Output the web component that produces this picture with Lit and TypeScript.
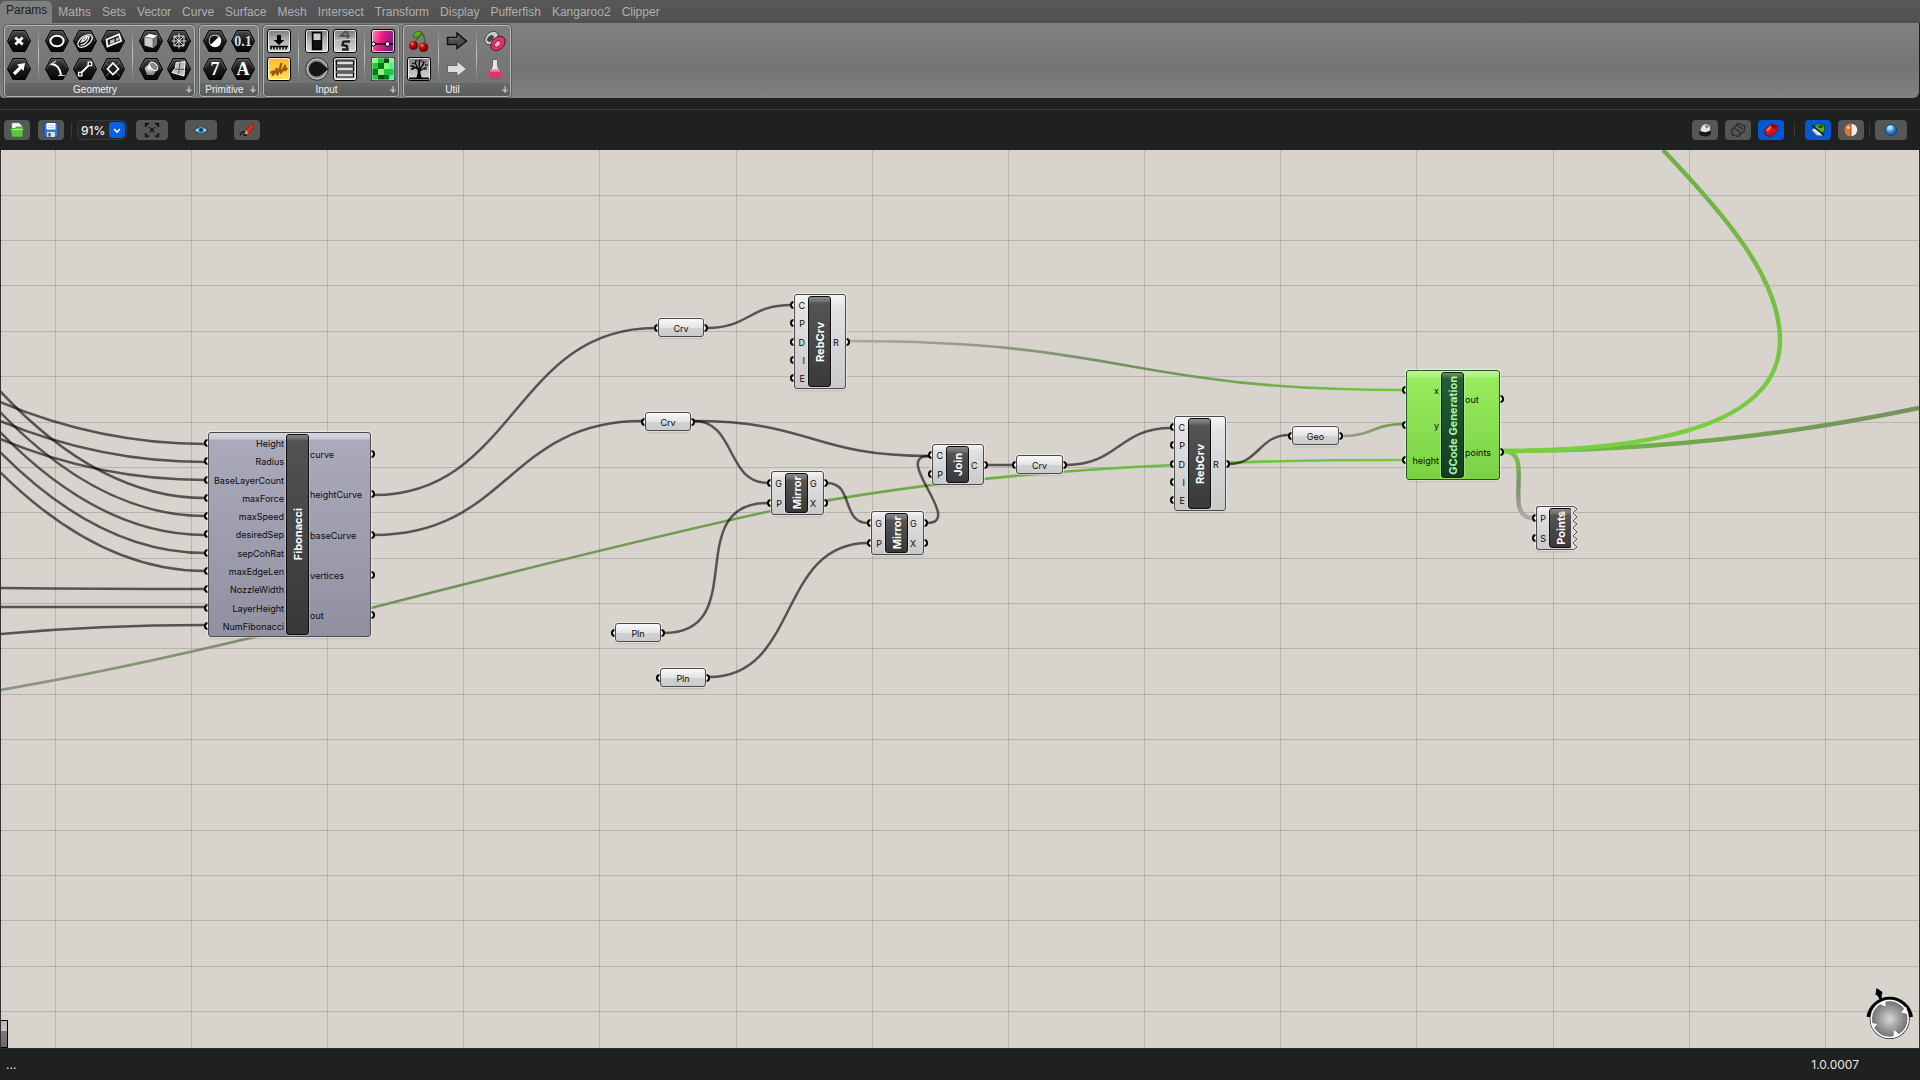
import { LitElement, html, svg, css, nothing } from "lit";
import { customElement, property } from "lit/decorators.js";
import { classMap } from "lit/directives/class-map.js";
import { styleMap } from "lit/directives/style-map.js";

interface NodeData {
  kind: "component" | "param" | "cluster" | "selected" | "torn";
  title: string;
  x: number;
  y: number;
  w: number;
  h: number;
  inputs: string[];
  outputs: string[];
}

const NODES: NodeData[] = [
  {
    kind: "cluster", title: "Fibonacci", x: 208, y: 282, w: 163, h: 205,
    inputs: ["Height", "Radius", "BaseLayerCount", "maxForce", "maxSpeed", "desiredSep", "sepCohRat", "maxEdgeLen", "NozzleWidth", "LayerHeight", "NumFibonacci"],
    outputs: ["curve", "heightCurve", "baseCurve", "vertices", "out"],
  },
  { kind: "component", title: "RebCrv", x: 794, y: 144, w: 52, h: 95, inputs: ["C", "P", "D", "I", "E"], outputs: ["R"] },
  { kind: "component", title: "Mirror", x: 771, y: 321, w: 53, h: 44, inputs: ["G", "P"], outputs: ["G", "X"] },
  { kind: "component", title: "Mirror", x: 871, y: 361, w: 53, h: 44, inputs: ["G", "P"], outputs: ["G", "X"] },
  { kind: "component", title: "Join", x: 932, y: 294, w: 52, h: 41, inputs: ["C", "P"], outputs: ["C"] },
  { kind: "component", title: "RebCrv", x: 1174, y: 266, w: 52, h: 95, inputs: ["C", "P", "D", "I", "E"], outputs: ["R"] },
  { kind: "selected", title: "GCode Generation", x: 1406, y: 220, w: 94, h: 110, inputs: ["x", "y", "height"], outputs: ["out", "points"] },
  { kind: "torn", title: "Points", x: 1536, y: 356, w: 38, h: 44, inputs: ["P", "S"], outputs: [] },
  { kind: "param", title: "Crv", x: 658, y: 168, w: 46, h: 19, inputs: [""], outputs: [""] },
  { kind: "param", title: "Crv", x: 645, y: 262, w: 46, h: 19, inputs: [""], outputs: [""] },
  { kind: "param", title: "Crv", x: 1016, y: 305, w: 47, h: 19, inputs: [""], outputs: [""] },
  { kind: "param", title: "Geo", x: 1292, y: 276, w: 47, h: 19, inputs: [""], outputs: [""] },
  { kind: "param", title: "Pln", x: 615, y: 473, w: 46, h: 19, inputs: [""], outputs: [""] },
  { kind: "param", title: "Pln", x: 660, y: 518, w: 46, h: 19, inputs: [""], outputs: [""] },
];

/* Wire between two ports: leaves and arrives horizontally, bends harder when the drop is steep. */
const link = (x1: number, y1: number, x2: number, y2: number) => {
  const d = Math.max((x2 - x1) / 2, Math.abs(y2 - y1) * 0.68);
  return `M${x1} ${y1} C${x1 + d} ${y1} ${x2 - d} ${y2} ${x2} ${y2}`;
};

/* Wire coming in from beyond the left edge of the canvas. */
const incoming = (y0: number, y1: number) => `M0 ${y0} Q100 ${y1} 205 ${y1}`;

const WIRES = [
  incoming(252, 294), incoming(271, 312), incoming(289, 330), incoming(241, 348),
  incoming(262, 366), incoming(282, 385), incoming(302, 403), incoming(322, 421),
  incoming(438, 439), incoming(457, 457), incoming(484, 475),
  link(374, 345, 655, 178), link(374, 385, 642, 271),
  link(707, 178, 791, 155), link(694, 271, 929, 306), link(694, 271, 768, 333),
  link(827, 333, 868, 373), link(987, 315, 1013, 315), link(1066, 315, 1171, 278),
  link(1229, 314, 1289, 285), link(664, 483, 768, 353), link(709, 527, 868, 393),
  "M927 373 C965 373 891 306 929 306",
];

@customElement("gh-node")
class GhNode extends LitElement {
  @property({ attribute: false }) data!: NodeData;

  static styles = css`
    :host { display: block; font-family: Inter, Roboto, "Liberation Sans", sans-serif; font-size: 9px; line-height: 12px; color: #0c0c0c; }
    .node { position: relative; height: 100%; display: flex; }
    .body {
      position: relative; flex: 1; box-sizing: border-box; min-width: 0; display: flex; padding: 1px 0;
      border: 1px solid #4b4b4b; border-radius: 3px;
      background: linear-gradient(#f6f6f6, #e2e2e2 14%, #c9c9c9);
      box-shadow: 0 0 1px 1px rgba(255, 255, 255, 0.55), 0 2px 2px rgba(0, 0, 0, 0.12);
    }
    .cluster .body { background: linear-gradient(#d6d6de, #cbcbd6 6px, #abaabb 7px, #9190a1); border-color: #4a4a52; }
    .selected .body { background: linear-gradient(#bdf89a, #a9f07b 6px, #98ec5e 7px, #7ad144); border-color: #1d5a1c; }
    .param .body {
      align-items: center; justify-content: center; padding: 2px 0 0;
      background: linear-gradient(#fafafa, #e4e4e4 50%, #d2d2d2 51%, #cbcbcb);
    }
    .torn .body { border-right: 0; border-radius: 3px 0 0 3px; }
    .list { display: flex; flex-direction: column; white-space: nowrap; width: 14px; }
    .list.in { align-items: flex-end; width: 10px; }
    .list.out { flex: 1; }
    .cluster .in { width: 75px; }
    .selected .in { width: 32px; }
    .label { flex: 1; display: flex; align-items: center; padding-top: 2px; }
    .title {
      width: 21px; margin: 0 2px 0 3px; flex: none; border: 1px solid #0d0d0d; border-radius: 3px;
      background: linear-gradient(#8b8b8b, #6a6a6a 5px, #555 6px, #393939);
      box-shadow: 0 0 0 1px rgba(255, 255, 255, 0.25);
      display: flex; align-items: center; justify-content: center; overflow: hidden;
    }
    .cluster .title { margin-left: 2px; background: linear-gradient(#848484, #606060 5px, #525252 6px, #383838); }
    .selected .title { margin: 0 1px 0 2px; background: linear-gradient(#6a8f70, #37663f 5px, #265c37 6px, #123d20); border-color: #0c2a12; }
    .cluster .title { margin-right: 1px; }
    .name { writing-mode: vertical-rl; transform: rotate(180deg); font-weight: 700; font-size: 11px; line-height: 20px; color: #fff; white-space: nowrap; }
    .selected .name { color: #a6f5a6; }
    .ports { position: absolute; top: 2px; bottom: 2px; width: 4px; display: flex; flex-direction: column; }
    .ports.left { left: -4px; }
    .ports.right { right: -4px; }
    .port { flex: 1; display: flex; align-items: center; }
    .dot { box-sizing: border-box; width: 4px; height: 8px; border: 2px solid #000; background: #fff; }
    .left .dot { border-right: 0; border-radius: 4px 0 0 4px; }
    .right .dot { border-left: 0; border-radius: 0 4px 4px 0; }
    .tear { position: absolute; top: 0; right: -4px; width: 7px; height: 100%; }
  `;

  private ports(side: "left" | "right", names: string[]) {
    return html`<div class="ports ${side}">${names.map(() => html`<div class="port"><span class="dot"></span></div>`)}</div>`;
  }

  render() {
    const d = this.data;
    const param = d.kind === "param";
    const labels = (names: string[], side: string) =>
      html`<div class="list ${side}">${names.map((n) => html`<span class="label">${n}</span>`)}</div>`;
    return html`
      <div class="node ${d.kind}">
        ${this.ports("left", d.inputs)} ${this.ports("right", d.outputs)}
        <div class="body">
          ${param
            ? d.title
            : html`${labels(d.inputs, "in")}
                <div class="title"><span class="name">${d.title}</span></div>
                ${d.outputs.length ? labels(d.outputs, "out") : nothing}`}
        </div>
        ${d.kind === "torn"
          ? html`<svg class="tear" viewBox="0 0 7 44">
              <path d="M0 0H3L6 3L2 7L6 11L2 15L6 18L2 22L6 26L2 30L6 33L2 37L6 41L3 44H0Z" fill="#dcdcdc" />
              <path d="M0 .5H3L6 3L2 7L6 11L2 15L6 18L2 22L6 26L2 30L6 33L2 37L6 41L3 43.5H0" fill="none" stroke="#555" />
            </svg>`
          : nothing}
      </div>
    `;
  }
}

const hex = (inner: unknown) => svg`
  <path d="M.5 12L6 1.5H18L23.5 12L18 22.5H6Z" fill="url(#hex)" stroke="#000" stroke-linejoin="round"/>
  <path d="M1.8 12L6.6 2.7H17.4L22.2 12" fill="none" stroke="#777" stroke-opacity=".7" stroke-width=".8"/>
  ${inner}`;

const tile = (inner: unknown, fill = "url(#tile)") => svg`
  <rect x=".5" y=".5" width="23" height="23" rx="2.5" fill=${fill} stroke="#000"/>
  <rect x="1.5" y="1.5" width="21" height="21" rx="1.5" fill="none" stroke="#fff" stroke-opacity=".75"/>
  ${inner}`;

const ICONS: Record<string, unknown> = {
  Point: hex(svg`<path d="M8.3 8.5L15.7 15.5M15.7 8.5L8.3 15.5" stroke="#fff" stroke-width="2.8"/>`),
  Vector: hex(svg`<path d="M7 17L14 10" stroke="#fff" stroke-width="3.2"/><path d="M10 7.5L18 6L16.5 14Z" fill="#fff"/>`),
  Circle: hex(svg`<ellipse cx="12" cy="12" rx="6.6" ry="5.2" fill="#111" stroke="#fff" stroke-width="2"/>`),
  Arc: hex(svg`<path d="M6 7Q14 7 16 18" fill="none" stroke="#fff" stroke-width="2"/><path d="M11 4L5 8M13 18.5H20" stroke="#ccc" stroke-width="1.2"/>`),
  Curve: hex(svg`<g fill="none" stroke="#eee" stroke-width="1.3" transform="rotate(-38 12 12)"><ellipse cx="12" cy="12" rx="8.4" ry="4.6"/><path d="M6 12.5Q12 16 18 11Q14 7.5 8.5 10.5Q13 12.5 16 10"/></g>`),
  Line: hex(svg`<path d="M7.5 16.5L16.5 7.5" stroke="#fff" stroke-width="1.8"/><path d="M5.5 15.5h3.4v3.4h-3.4zM15.2 5.2h3.4v3.4h-3.4z" fill="#111" stroke="#fff" stroke-width="1.3"/>`),
  Plane: hex(svg`<path d="M5.5 10.5L18 5.5L20 12L6.5 17.5Z" fill="#222" stroke="#fff" stroke-width="1.8"/><path d="M9 11.5L13.5 9.8V13.5L9 15ZM15 9.2L17.5 8.3L18 11L15 12.2Z" fill="#bbb"/>`),
  Rectangle: hex(svg`<path d="M5 6L19 19M19 5L5 19" stroke="#777" stroke-width=".9"/><path d="M12 6L17.5 12L12 17.5L6.5 12Z" fill="#222" stroke="#fff" stroke-width="1.7"/>`),
  Box: hex(svg`<path d="M5.5 8L10 5L18 6.5V15L14 19L5.5 16.5Z" fill="#ccc"/><path d="M5.5 8L10 5L18 6.5L14 9.5Z" fill="#fff"/><path d="M14 9.5L18 6.5V15L14 19Z" fill="#777"/><path d="M5.5 8L14 9.5V19" fill="none" stroke="#444" stroke-width=".6"/>`),
  Brep: hex(svg`<path d="M5.5 11L11.5 5.5L18.5 12L14.5 18L8 18Z" fill="url(#ball)"/><ellipse cx="14.8" cy="9.3" rx="5" ry="3.2" fill="#888" stroke="#fff" transform="rotate(45 14.8 9.3)"/>`),
  Mesh: hex(svg`<path d="M7 7H17V17H7ZM12 4.5V19.5M4.5 12H19.5M7 7L17 17M17 7L7 17M7 9.5L9.5 7M14.5 17L17 14.5" fill="none" stroke="#ddd" stroke-width="1"/>`),
  Surface: hex(svg`<path d="M9 6L18 4.5L17 19L5 15.5Q10 11 9 6Z" fill="#bbb" stroke="#fff"/><path d="M13 5.5L11.5 17M8 12L17.5 12.5" stroke="#444" stroke-width=".9"/>`),
  Boolean: hex(svg`<circle cx="12" cy="12" r="6.2" fill="#fff"/><path d="M15.6 8A4.8 4.8 0 0 0 8 15.6Z" fill="#111"/>`),
  Number: hex(svg`<text x="12" y="17" class="serif">0.1</text>`),
  Integer: hex(svg`<text x="12" y="18" class="big">7</text>`),
  Text: hex(svg`<text x="12" y="18" class="big">A</text>`),
  "Import Data": tile(svg`<path d="M10 6h4v5h3.4L12 16L6.6 11H10Z" fill="#000"/><path d="M3 17.5H21M4 20.5v-3M7 20.5v-3M10 20.5v-3M13 20.5v-3M16 20.5v-3M19 20.5v-3" stroke="#000" stroke-width="1.5"/>`),
  Graffiti: tile(svg`<path d="M3.5 16Q5 14 6 14.5Q5 18.5 6 18L10 11Q9 18 10.5 17.5L14.5 6Q12.5 15.5 14 16L18.5 8Q16.5 14 18 13.5L20.5 11" fill="none" stroke="#a35608" stroke-width="2"/>`, "url(#gold)"),
  Toggle: tile(svg`<path d="M7.5 3.5h9v17h-9z" fill="#111" stroke="#000" stroke-width="1.4"/><path d="M8.5 4.5h7V11h-7z" fill="#ccc"/>`),
  Knob: svg`<circle cx="12" cy="12" r="11.2" fill="#8d8d8d" stroke="#2c2c2c" stroke-width=".9"/><circle cx="12" cy="12" r="10" fill="none" stroke="#d0d0d0" stroke-width=".9"/><circle cx="11.5" cy="12" r="7.6" fill="#161616"/><path d="M15.5 5.5L23.5 12L15.5 18.5Z" fill="#161616"/>`,
  Digits: tile(svg`<path d="M13 2L8 7H17M14.5 2V9.5" stroke="#555" stroke-width="2.2" fill="none"/><path d="M17 12.5H10.5L9.5 16L14 17L14.5 20.5H9" stroke="#222" stroke-width="2.4" fill="none"/><path d="M2 11.5L22 10" stroke="#ddd" stroke-width=".8"/>`),
  "Value List": tile(svg`<path d="M3.5 4h17v4h-17zM3.5 10h17v4h-17zM3.5 16h17v4h-17z" fill="#ddd" stroke="#000" stroke-width="1.2"/>`),
  Gradient: tile(svg`<path d="M2 15H22" stroke="#000" stroke-width="1.3"/><circle cx="2.5" cy="15" r="2" fill="#fff" stroke="#000"/><circle cx="16.5" cy="15" r="2.3" fill="#fff" stroke="#000"/>`, "url(#pink)"),
  "Image Sampler": svg`<rect width="24" height="24" rx="2.5" fill="#000"/><path d="M1 1h22v22H1z" fill="#1ec83c"/>
    <path d="M1 1h6v5H1zM13 6h5v6h-5zM7 12h6v6H7zM18 1h5v5h-5z" fill="#8af47c"/><path d="M7 6h6v6H7zM1 12h6v6H1zM13 18h5v5h-5z" fill="#067616"/><path d="M13 1h5v5h-5zM7 18h6v5H7z" fill="#0a4f12"/><path d="M18 6h5v6h-5zM18 18h5v5h-5z" fill="#46f0a0"/><rect x="1" y="1" width="22" height="22" rx="1.5" fill="none" stroke="#e8ffe8" stroke-opacity=".7"/>`,
  "Cherry Picker": svg`<path d="M7 15Q10 9 15 4Q18 8 18 14" fill="none" stroke="#3d6b14" stroke-width="1.4"/><path d="M15 3Q8 0 6 8Q12 10 15 3Z" fill="#5fae1c" stroke="#23520a" stroke-width=".7"/><circle cx="6.5" cy="16.5" r="4.6" fill="url(#red)"/><circle cx="16.5" cy="18.3" r="4.8" fill="url(#red)"/>`,
  Tree: tile(svg`<path d="M10 21Q12 17 11.3 12L5 9M11.5 14L8 5M12 12L12.5 4M12.5 13L17 6M12.5 14L19.5 10M5 12L8.5 10.5" fill="none" stroke="#000" stroke-width="1.4"/><path d="M9.5 21.5Q11.5 18 11 12H13.3Q13 18 15 21.5Z" fill="#000"/><path d="M3.5 9h3M5 6.5h3M8 4h3M12 3.5h3M15.5 5h3M18 8h3M17 12h3M4 12h2" stroke="#000" stroke-width="1.6" stroke-dasharray="1.6 .7"/><path d="M2 21.5H22" stroke="#000" stroke-width="2"/>`),
  "Relay In": svg`<path d="M2.5 8.5H12V4L21.5 12L12 19.5V15.5H2.5Z" fill="#4c4e4d" stroke="#111" stroke-width="1.5"/><path d="M4 9.8H13V7" fill="none" stroke="#999" stroke-width=".7"/>`,
  "Relay Out": svg`<path d="M2.5 8.5H12V4L21.5 12L12 19.5V15.5H2.5Z" fill="#dcdcdc" stroke="#555" stroke-width=".8"/>`,
  "Data Dam": svg`<ellipse cx="8.5" cy="9" rx="5.6" ry="7.8" transform="rotate(45 8.5 9)" fill="#c8c8c8" stroke="#333" stroke-width=".8"/><ellipse cx="7.5" cy="9.5" rx="2.6" ry="3.8" transform="rotate(45 7.5 9.5)" fill="#444"/><ellipse cx="15" cy="14.5" rx="6" ry="8.2" transform="rotate(45 15 14.5)" fill="#e2336f" stroke="#4d0c26" stroke-width=".9"/><ellipse cx="14.5" cy="15" rx="2.6" ry="3.8" transform="rotate(45 14.5 15)" fill="#f9a5c4" stroke="#7c1239" stroke-width=".9"/>`,
  Flask: svg`<path d="M9.5 2.5H14.5V9L19.5 19Q20 21.5 17.5 21.5H6.5Q4 21.5 4.7 19L9.5 9Z" fill="#e6e6ea" stroke="#555" stroke-width=".8"/><path d="M7.7 12.6H16.3L19.3 19Q19.6 21 17.5 21H6.5Q4.5 21 5 19Z" fill="#d9386f"/><path d="M7.7 12.6H16.3L17 14.5H7Z" fill="#f58db2"/>`,
  Open: svg`<path d="M7 5h7l3 3v5H7z" fill="#f3f3f3" stroke="#aaa" stroke-width=".5"/><path d="M5.5 10.5H10L11.5 9H18.5L17.5 19H7Z" fill="#5cc63c" stroke="#2f7f1e" stroke-width=".7"/><path d="M6.5 11.5H17.5" stroke="#a7ef8a"/>`,
  Save: svg`<path d="M5 5H19V19H6.5L5 17.5Z" fill="#2d79e0" stroke="#123f8c" stroke-width=".9"/><path d="M7.5 5h9v6.5h-9z" fill="#fff"/><path d="M9 7.5h6M9 9.5h6" stroke="#bbb" stroke-width=".8"/><path d="M8 14h8v5H8z" fill="#ddd"/><path d="M9.5 15h2v3.5h-2z" fill="#123f8c"/>`,
  "Zoom Extents": svg`<path d="M5.8 9V5.8H9M15 5.8H18.2V9M18.2 15V18.2H15M9 18.2H5.8V15" fill="none" stroke="#161717" stroke-width="2"/><path d="M9 9L15 15M15 9L9 15" stroke="#161717"/><circle cx="12" cy="12" r="1.8" fill="#161717"/>`,
  Views: svg`<path d="M5.5 12.5Q12 5 18.5 12.5Q12 18 5.5 12.5Z" fill="#e9f8ff" stroke="#111" stroke-width=".9"/><circle cx="12" cy="12" r="3.5" fill="#2aa3d8"/><circle cx="12" cy="12" r="1.7" fill="#082c44"/>`,
  Sketch: svg`<path d="M5 17.5Q7 12 10 14.5Q7 18.5 12 17" fill="none" stroke="#111" stroke-width="1.3"/><path d="M9.5 16L11 12L17 5.5L19.5 8.5L13.5 15.5Z" fill="#e32b22" stroke="#6c0d09" stroke-width=".6"/><path d="M9.5 16L11 12L13.5 15.5Z" fill="#f4a08a"/>`,
  "No Preview": svg`<ellipse cx="12" cy="15" rx="6" ry="3.6" fill="#161616"/><path d="M7.5 13Q8 6.5 13 6L17 8V12.5Q12 15.5 7.5 13Z" fill="#e4e4e4"/><path d="M12 6.5L16.5 8.5L13 10.5Z" fill="#777"/>`,
  Wireframe: svg`<path d="M5.5 12L12 5.5L18.5 8V12.5L12 18.5L6.5 17ZM8 10.5L13.5 13.5V17.5M11 7.5L17 11" fill="none" stroke="#2c2d2d" stroke-width="1.3"/>`,
  Shaded: svg`<path d="M5.5 12L12 5.5L18.5 8V12.5L12 18.5L6.5 17Z" fill="#d3151b" stroke="#5c0407" stroke-width=".8" stroke-linejoin="round"/><path d="M7 12L12 7L14 8L9 13.5Z" fill="#ff6a62"/><ellipse cx="14.5" cy="8.5" rx="3" ry="1.7" fill="#8c0a0e" transform="rotate(20 14.5 8.5)"/>`,
  "Selected Preview": svg`<path d="M5.5 12L11 17.5L16 18L15.5 14L10 9Z" fill="#dedede" stroke="#555" stroke-width=".6"/><path d="M8 8.5L12.5 5.5L18.5 7.5L18.5 13L15.5 15Z" fill="#4fb32a" stroke="#173f0b" stroke-width=".8"/><path d="M6 7.5L18 17" stroke="#111" stroke-width="1.4"/><ellipse cx="14.5" cy="8.6" rx="2.8" ry="1.6" fill="#1c5a10"/>`,
  Document: svg`<circle cx="12" cy="12" r="6.2" fill="#eee"/><path d="M12 5.8A6.2 6.2 0 0 0 12 18.2Z" fill="#e8742a"/><path d="M12 5.8V18.2" stroke="#6c3008" stroke-width=".8"/><circle cx="9.5" cy="9.5" r="1.6" fill="#ffc59a"/>`,
  Quality: svg`<circle cx="12" cy="12" r="5.6" fill="url(#blue)" stroke="#123e7c" stroke-width="1"/>`,
};

const icon = (name: string) => html`<svg class="icon" viewBox="0 0 24 24" aria-hidden="true">${ICONS[name]}</svg>`;

const TABS = ["Params", "Maths", "Sets", "Vector", "Curve", "Surface", "Mesh", "Intersect", "Transform", "Display", "Pufferfish", "Kangaroo2", "Clipper"];

/* Each group holds blocks of columns; a column is an upper and a lower icon. */
const GROUPS: { label: string; blocks: string[][][] }[] = [
  {
    label: "Geometry",
    blocks: [
      [["Point", "Vector"]],
      [["Circle", "Arc"], ["Curve", "Line"], ["Plane", "Rectangle"]],
      [["Box", "Brep"], ["Mesh", "Surface"]],
    ],
  },
  { label: "Primitive", blocks: [[["Boolean", "Integer"], ["Number", "Text"]]] },
  {
    label: "Input",
    blocks: [[["Import Data", "Graffiti"]], [["Toggle", "Knob"], ["Digits", "Value List"]], [["Gradient", "Image Sampler"]]],
  },
  { label: "Util", blocks: [[["Cherry Picker", "Tree"]], [["Relay In", "Relay Out"]], [["Data Dam", "Flask"]]] },
];

@customElement("app-root")
class AppRoot extends LitElement {
  static styles = css`
    :host {
      display: flex; flex-direction: column; height: 100vh; overflow: hidden; background: #1e2120;
      font-family: "Liberation Sans", Arial, sans-serif; color: #e6e6e6;
    }
    button { font: inherit; color: inherit; background: none; border: 0; padding: 0; margin: 0; display: block; }
    .defs { position: absolute; width: 0; height: 0; }
    .icon { display: block; width: 24px; height: 24px; }
    .serif { font: 700 14px "Liberation Serif", serif; fill: #ddd; text-anchor: middle; }
    .big { font: 700 18px "Liberation Serif", serif; fill: #fff; text-anchor: middle; }

    .tabs { display: flex; height: 23px; background: linear-gradient(#585858, #515151); }
    .tab { height: 23px; padding: 1px 5px 0 6px; font-size: 12px; line-height: 22px; color: #b0b0b0; }
    .tab.active { height: 22px; margin-top: 1px; padding-top: 0; line-height: 18px; color: #1c1c1c; background: #7d807f; border-radius: 5px 5px 0 0; display: flex; align-items: flex-start; }

    .ribbon {
      display: flex; gap: 4px; padding: 2px 4px 1px; margin-right: 1px;
      background: linear-gradient(#7f8281, #727574 60%, #7f8281); border-radius: 0 0 6px 4px;
    }
    .group { border: 1px solid #b4b5b5; border-radius: 4px; background: linear-gradient(#7c7f7e, #6f7271); box-shadow: 0 0 0 1px #5c5e5d; display: flex; flex-direction: column; overflow: hidden; }
    .blocks { display: flex; gap: 4px; padding: 3px 3px 2px 2px; }
    .group + .group .blocks { padding-left: 3px; }
    .block { display: flex; gap: 4px; }
    .column { display: flex; flex-direction: column; gap: 4px; }
    .divider { width: 6px; display: flex; justify-content: center; }
    .divider::before { content: ""; width: 1px; background: linear-gradient(transparent, #c4c4c4, transparent); }
    .caption { display: flex; align-items: center; height: 13px; padding: 1px 1px 0 0; box-sizing: border-box; background: linear-gradient(#666968, #595c5b); font-size: 10px; line-height: 12px; color: #f2f2f2; }
    .caption span { flex: 1; text-align: center; }
    .more { width: 8px; height: 8px; display: block; }

    .toolbar { display: flex; align-items: center; height: 40px; margin-top: 11px; border-top: 1px solid #3a3c3b; padding: 0 13px 0 4px; }
    .tool { width: 26px; height: 20px; border-radius: 4px; background: #545756; display: flex; align-items: center; justify-content: center; flex: none; }
    .tool.wide { width: 32px; }
    .tool.on { background: #0558d0; }
    .gap5 { margin-left: 5px; }
    .gap7 { margin-left: 7px; }
    .gap8 { margin-left: 8px; }
    .gap17 { margin-left: 17px; }
    .bar { width: 1px; height: 16px; background: #3a3c3b; margin-left: 5px; flex: none; }
    .bar.spaced { margin-left: 10px; margin-right: 2px; }
    .bar.first { margin-left: 7px; }
    .zoom { position: relative; margin-left: 5px; margin-right: 9px; width: 50px; height: 20px; }
    .zoom select {
      appearance: none; box-sizing: border-box; width: 100%; height: 100%; border: 1px solid #373a39; border-radius: 5px; background: #252827;
      color: #f0f0f0; font: 500 12px Inter, Roboto, sans-serif; padding: 0 0 0 3px; margin: 0; display: block;
    }
    .chevron { position: absolute; right: 2px; top: 2px; width: 16px; height: 16px; background: #0a5fdc; border-radius: 4px; pointer-events: none; }
    .spacer { flex: 1; }

    .canvas { position: relative; flex: 1; min-height: 0; overflow: hidden; background: #d8d3cd; border-left: 1px solid #303332; border-right: 1px solid #303332; }
    .world { position: absolute; left: -1px; top: 0; width: 100%; height: 100%; }
    .wires { position: absolute; left: 0; top: 0; width: 100%; height: 100%; overflow: visible; }
    .placed { position: absolute; }
    .thumb { position: absolute; left: -1px; bottom: 0; width: 7px; height: 26px; border: 1px solid #000; border-width: 1px 1px 1px 0; background: linear-gradient(#b8b8b8, #c8c8c8 38%, #7c7a78 40%, #6b6967); }
    .compass { position: absolute; right: 4px; bottom: 2px; width: 50px; height: 60px; }

    .status { display: flex; align-items: center; justify-content: space-between; height: 31px; border-top: 1px solid #2c2f2e; padding: 0 61px 0 6px; font: 400 12px/16px Inter, Roboto, sans-serif; }
  `;

  private defs() {
    return html`<svg class="defs" aria-hidden="true">
      <defs>
        <linearGradient id="hex" x2="0" y2="1"><stop stop-color="#4a4a4a" /><stop offset=".45" stop-color="#1c1c1c" /><stop offset="1" stop-color="#060606" /></linearGradient>
        <linearGradient id="tile" x2="0" y2="1"><stop stop-color="#777" /><stop offset=".5" stop-color="#b4b4b4" /><stop offset="1" stop-color="#d8d8d8" /></linearGradient>
        <linearGradient id="gold" x2="0" y2="1"><stop stop-color="#ffb52a" /><stop offset="1" stop-color="#ffe45c" /></linearGradient>
        <linearGradient id="pink" y2=".3"><stop stop-color="#ff9ac0" /><stop offset=".5" stop-color="#f0187c" /><stop offset="1" stop-color="#7c1c8c" /></linearGradient>
        <radialGradient id="red" cx=".35" cy=".3"><stop stop-color="#ffb0a8" /><stop offset=".35" stop-color="#e01a1a" /><stop offset="1" stop-color="#7d0303" /></radialGradient>
        <radialGradient id="blue" cx=".4" cy=".3"><stop stop-color="#e2f6ff" /><stop offset=".5" stop-color="#69b9f2" /><stop offset="1" stop-color="#2468b8" /></radialGradient>
        <radialGradient id="ball" cx=".4" cy=".4"><stop stop-color="#fff" /><stop offset="1" stop-color="#888" /></radialGradient>
      </defs>
    </svg>`;
  }

  private group(g: (typeof GROUPS)[number]) {
    return html`<section class="group">
      <div class="blocks">
        ${g.blocks.map(
          (block, i) => html`${i ? html`<div class="divider"></div>` : nothing}
            <div class="block">
              ${block.map((col) => html`<div class="column">${col.map((n) => html`<button aria-label=${n}>${icon(n)}</button>`)}</div>`)}
            </div>`,
        )}
      </div>
      <div class="caption">
        <span>${g.label}</span>
        <svg class="more" viewBox="0 0 8 8"><path d="M4 0V6M1 4H7" stroke="#c4c4c4" stroke-width="1.2" /><path d="M2 4.5H6L4 7Z" fill="#c4c4c4" /></svg>
      </div>
    </section>`;
  }

  private tool(name: string, cls = "") {
    return html`<button class="tool ${cls}" aria-label=${name}>${icon(name)}</button>`;
  }

  private grid() {
    const v = Array.from({ length: 30 }, (_, i) => Math.floor(55.2 + i * 136.17));
    const h = Array.from({ length: 50 }, (_, i) => Math.floor(45.2 + i * 45.36));
    return svg`
      ${v.map((x) => svg`<rect x=${x} y="0" width="1" height="100%"/>`)}
      ${h.map((y) => svg`<rect x="0" y=${y} width="100%" height="1"/>`)}`;
  }

  private wires() {
    return html`<svg class="wires" aria-hidden="true">
      <defs>
        <linearGradient id="long" gradientUnits="userSpaceOnUse" x1="0" y1="0" x2="1404" y2="0"><stop stop-color="#8c9580" /><stop offset=".3" stop-color="#74905c" /><stop offset=".6" stop-color="#6da648" /><stop offset="1" stop-color="#72cc3e" /></linearGradient>
        <linearGradient id="upper" gradientUnits="userSpaceOnUse" x1="850" y1="0" x2="1404" y2="0"><stop stop-color="#a8a6a0" /><stop offset=".5" stop-color="#748f60" /><stop offset="1" stop-color="#70cc3c" /></linearGradient>
        <linearGradient id="short" gradientUnits="userSpaceOnUse" x1="1343" y1="0" x2="1404" y2="0"><stop stop-color="#9c9d92" /><stop offset="1" stop-color="#66a040" /></linearGradient>
        <linearGradient id="away" gradientUnits="userSpaceOnUse" x1="1504" y1="0" x2="1919" y2="0"><stop stop-color="#72cc3c" /><stop offset=".4" stop-color="#71a94d" /><stop offset="1" stop-color="#76915f" /></linearGradient>
        <linearGradient id="loop" gradientUnits="userSpaceOnUse" x1="0" y1="301" x2="0" y2="0"><stop stop-color="#77d13f" /><stop offset="1" stop-color="#72ae48" /></linearGradient>
        <linearGradient id="fade" gradientUnits="userSpaceOnUse" x1="0" y1="301" x2="0" y2="368"><stop stop-color="#76cc40" /><stop offset=".5" stop-color="#7a9166" /><stop offset="1" stop-color="#aeaba6" /></linearGradient>
      </defs>
      <g fill="#000" fill-opacity=".15">${this.grid()}</g>
      <g fill="none" stroke-width="2.6">
        <path stroke="url(#long)" d="M0 540 C124 519 247 490 371 458 C504 424 638 390 771 361 C905 334 1040 321 1174 315 C1250 311 1327 310 1404 310" />
        <path stroke="url(#upper)" d=${link(849, 191, 1404, 240)} />
        <path stroke="url(#short)" d=${link(1342, 286, 1404, 274)} />
      </g>
      <g fill="none" stroke-width="4.4">
        <path stroke="url(#away)" d="M1504 301 Q1713 301 1919 258" />
        <path stroke="url(#fade)" d="M1504 301 C1536 301 1501 368 1533 368" />
        <path stroke="url(#loop)" d="M1504 301 C1680 300 1780 266 1780 190 C1780 130 1728 68 1663 0" />
      </g>
      <g fill="none" stroke="#000" stroke-opacity=".6" stroke-width="2.5">${WIRES.map((d) => svg`<path d=${d}/>`)}</g>
    </svg>`;
  }

  private compass() {
    return html`<svg class="compass" viewBox="0 0 50 60" aria-hidden="true">
      <defs><radialGradient id="dial"><stop stop-color="#d8d8d8" /><stop offset="1" stop-color="#6e6e6e" /></radialGradient></defs>
      <path d="M3.5 31A21.5 21.5 0 0 1 46 31" fill="none" stroke="#000" stroke-width="4" />
      <circle cx="24.7" cy="33" r="20" fill="#222" />
      <circle cx="24.7" cy="33" r="18.5" fill="url(#dial)" stroke="#fff" stroke-width="1.6" />
      <path d="M14.5 18L20.5 15V20.5ZM41 20.5L43 28L36 26.5ZM6 37L12 38L8 43.5ZM29 44L34.5 48.5L28.5 51.5Z" fill="#fff" />
      <path d="M11.5 2L17.5 6L16 12L10.5 8.5Z" fill="#000" /><path d="M14 9L16 13" stroke="#000" stroke-width="3" />
    </svg>`;
  }

  render() {
    return html`
      ${this.defs()}
      <nav class="tabs">
        ${TABS.map((t, i) => html`<button class=${classMap({ tab: true, active: i === 0 })}>${t}</button>`)}
      </nav>
      <div class="ribbon">${GROUPS.map((g) => this.group(g))}</div>
      <div class="toolbar">
        ${this.tool("Open")} ${this.tool("Save", "gap8")}
        <div class="bar first"></div>
        <div class="zoom">
          <select aria-label="Zoom"><option>91%</option></select>
          <svg class="chevron" viewBox="0 0 16 16"><path d="M5 7L8 10L11 7" fill="none" stroke="#fff" stroke-width="1.6" /></svg>
        </div>
        ${this.tool("Zoom Extents", "wide")} ${this.tool("Views", "wide gap17")} ${this.tool("Sketch", "gap17")}
        <div class="spacer"></div>
        ${this.tool("No Preview")} ${this.tool("Wireframe", "gap7")} ${this.tool("Shaded", "on gap7")}
        <div class="bar spaced"></div>
        ${this.tool("Selected Preview", "on gap8")} ${this.tool("Document", "gap7")}
        <div class="bar"></div>
        ${this.tool("Quality", "wide gap5")}
      </div>
      <main class="canvas">
        <div class="world">
          ${this.wires()}
          ${NODES.map(
            (n) => html`<gh-node
              class="placed"
              .data=${n}
              style=${styleMap({ left: `${n.x}px`, top: `${n.y}px`, width: `${n.w}px`, height: `${n.h}px` })}
            ></gh-node>`,
          )}
        </div>
        <div class="thumb"></div>
        ${this.compass()}
      </main>
      <footer class="status"><span>...</span><span>1.0.0007</span></footer>
    `;
  }
}
